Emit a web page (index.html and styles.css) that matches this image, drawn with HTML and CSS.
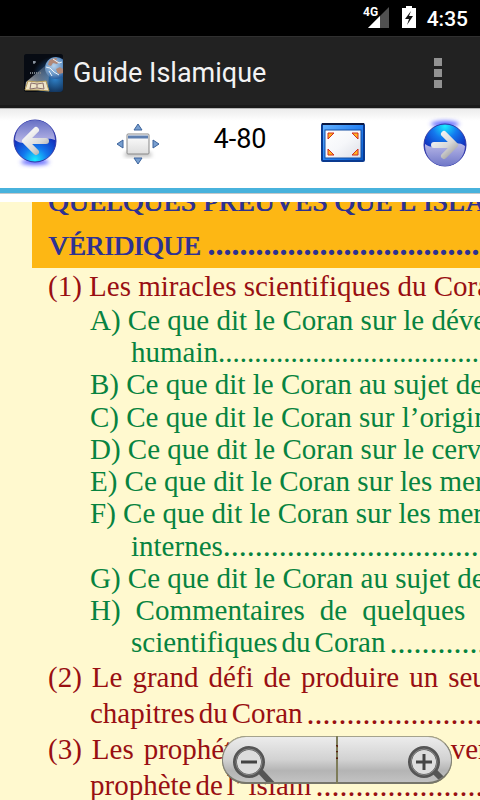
FILE: index.html
```html
<!DOCTYPE html>
<html lang="fr">
<head>
<meta charset="utf-8">
<meta name="viewport" content="width=device-width, initial-scale=1">
<title>Guide Islamique</title>
<link rel="stylesheet" href="styles.css">
</head>
<body>
<div class="status">
  <svg class="signal" width="28" height="24" viewBox="0 0 28 24" role="img" aria-label="Signal">
    <path d="M27 2v21H6z" fill="#505050"/><path d="M18 11v12H6z" fill="#fff"/>
    <text x="1" y="11" class="network">4G</text>
  </svg>
  <svg class="battery" width="14" height="22" viewBox="0 0 14 22" role="img" aria-label="Batterie">
    <path d="M4 0h6v2h4v20H0V2h4z" fill="#fff"/><path d="M9 5 3 13h4l-2 6 6-9H7z" fill="#111"/>
  </svg>
  <time>4:35</time>
</div>
<header class="appbar">
  <svg class="logo" width="39" height="38" viewBox="0 0 39 38" aria-hidden="true">
    <defs>
      <radialGradient id="sky" cx=".8" cy=".65" r=".6"><stop offset="0" stop-color="#2f83cb"/><stop offset=".55" stop-color="#153b66"/><stop offset="1" stop-color="#070b13"/></radialGradient>
      <linearGradient id="beam" x1="1" y1="0" x2="0" y2="1"><stop offset="0" stop-color="#8b99ad" stop-opacity=".2"/><stop offset=".5" stop-color="#8f99a6" stop-opacity=".7"/><stop offset="1" stop-color="#e0dfdb"/></linearGradient>
      <radialGradient id="globe" cx=".4" cy=".4" r=".6"><stop offset="0" stop-color="#b9d2ea"/><stop offset=".6" stop-color="#6f9ccb"/><stop offset="1" stop-color="#2a5f9f"/></radialGradient>
      <clipPath id="frame"><rect width="39" height="38" rx="3"/></clipPath>
    </defs>
    <g clip-path="url(#frame)">
      <rect width="39" height="38" fill="#080d15"/>
      <rect width="39" height="38" fill="url(#sky)"/>
      <circle cx="32" cy="14" r="11" fill="url(#globe)"/>
      <path d="M25 7c2-2 5-3 8-3l-1 3 3 1-2 2-4-1-2 3-3-1zM32 15l4-2 3 2v4l-4 1-2-2z" fill="#b08878"/>
      <path d="M22 13l4 1 4 4 5 3M29 5l6 4 3-1M25 17l3 5" stroke="#edf3f8" fill="none"/>
      <path d="M21 12 2 28l-1 8 23-1 1-14z" fill="url(#beam)"/>
      <path d="m4 27 9 1 9-1 3 10-11-1-13 0z" fill="#efe5c8" stroke="#b59b58"/>
      <path d="m7 29 6 1 6-1 1 6-7-1-7 1zM13 30v4" stroke="#8b6f6b" fill="none"/>
      <path d="M10 7v3M9 8h3" stroke="#b6c1cd"/><path d="M6 19h12" stroke="#777f86" stroke-width="2" stroke-dasharray="1 1"/>
    </g>
  </svg>
  <h1>Guide Islamique</h1>
  <button class="overflow" type="button" aria-label="Plus d'options"><i></i><i></i><i></i></button>
</header>
<nav class="toolbar" aria-label="Pages">
  <button type="button" aria-label="Page précédente">
    <svg width="48" height="52" viewBox="0 0 48 52">
      <defs>
        <radialGradient id="ballL" cx=".5" cy=".95" r=".75"><stop offset="0" stop-color="#19edff"/><stop offset=".4" stop-color="#1378ee"/><stop offset="1" stop-color="#111aae"/></radialGradient>
        <linearGradient id="glossL" x2="0" y2="1"><stop offset="0" stop-color="#6770c4"/><stop offset="1" stop-color="#b9b8e8"/></linearGradient>
        <linearGradient id="metal" gradientUnits="userSpaceOnUse" x1="14" y1="12" x2="36" y2="38"><stop offset="0" stop-color="#fff"/><stop offset=".6" stop-color="#d8d8d8"/><stop offset="1" stop-color="#999"/></linearGradient>
        <filter id="soft" x="-30%" y="-100%" width="160%" height="300%"><feGaussianBlur stdDeviation="2"/></filter>
      </defs>
      <ellipse cx="24" cy="45" rx="14" ry="3" fill="#5b62ff" filter="url(#soft)"/>
      <circle cx="24" cy="24" r="21" fill="url(#ballL)" stroke="#3037a5"/>
      <path d="M4 23A20 20 0 0 1 44 23C37 20 30 23 24 24S10 28 4 23z" fill="url(#glossL)"/>
      <path d="M25 13 14 24l11 11M15 24h20" fill="none" stroke="url(#metal)" stroke-width="6" stroke-linecap="round" stroke-linejoin="round"/>
    </svg>
  </button>
  <button type="button" aria-label="Ajuster à l'écran">
    <svg width="48" height="52" viewBox="0 0 48 52">
      <defs><linearGradient id="pane" x2="0" y2="1"><stop offset="0" stop-color="#fff"/><stop offset="1" stop-color="#ddd"/></linearGradient></defs>
      <path d="M12 36h24l2 3H10z" fill="#999" filter="url(#soft)"/>
      <rect x="13" y="17" width="22" height="20" rx="1" fill="url(#pane)" stroke="#888"/>
      <path d="M14 20h20" stroke="#5e7fb0" stroke-width="3"/>
      <path d="m24 7 4 6h-8zM24 47l4-6h-8zM3 27l6-4v8zM45 27l-6-4v8z" fill="#789fd0" stroke="#3c639b"/>
    </svg>
  </button>
  <span class="page">4-80</span>
  <button type="button" aria-label="Plein écran">
    <svg width="48" height="52" viewBox="0 0 48 52">
      <defs>
        <linearGradient id="win" x2="1" y2="1"><stop offset="0" stop-color="#66b3ff"/><stop offset=".5" stop-color="#2682f4"/><stop offset="1" stop-color="#0758c5"/></linearGradient>
        <linearGradient id="glass" x2="1" y2="1"><stop offset="0" stop-color="#fff"/><stop offset=".5" stop-color="#f6f7fa"/><stop offset="1" stop-color="#dcdfe7"/></linearGradient>
      </defs>
      <rect x="3" y="7" width="42" height="37" rx="1" fill="url(#win)" stroke="#0a3a90" stroke-width="2"/>
      <path d="M3 7h42" stroke="#0a1740" stroke-width="2"/>
      <rect x="6" y="13" width="36" height="28" fill="url(#glass)" stroke="#174fa2"/>
      <path d="M9 16h6l-6 6zM39 16h-6l6 6zM9 38h6l-6-6zM39 38h-6l6-6z" fill="#ffb520" stroke="#d22d20"/>
    </svg>
  </button>
  <button type="button" aria-label="Page suivante">
    <svg width="48" height="52" viewBox="0 0 48 52">
      <defs>
        <radialGradient id="ballR" cx=".5" cy=".05" r=".75"><stop offset="0" stop-color="#19edff"/><stop offset=".4" stop-color="#1378ee"/><stop offset="1" stop-color="#111aae"/></radialGradient>
        <linearGradient id="glossR" x2="0" y2="1"><stop offset="0" stop-color="#b9b8e8"/><stop offset="1" stop-color="#7078c8"/></linearGradient>
      </defs>
      <ellipse cx="24" cy="7" rx="14" ry="3" fill="#5b62ff" filter="url(#soft)"/>
      <circle cx="24" cy="28" r="21" fill="url(#ballR)" stroke="#3037a5"/>
      <path d="M4 29A20 20 0 0 0 44 29C38 24 30 27 24 28S10 32 4 27z" fill="url(#glossR)"/>
      <path d="m23 17 11 11-11 11M13 28h20" fill="none" stroke="url(#metal)" stroke-width="6" stroke-linecap="round" stroke-linejoin="round"/>
    </svg>
  </button>
</nav>
<main class="viewer">
  <article class="sheet">
    <h2><span>QUELQUES PREUVES QUE L’ISLAM</span><span>VÉRIDIQUE <b class="dots">........................................</b></span></h2>
    <p class="part">(1) Les miracles scientifiques du Coran</p>
    <div class="points">
      <p>A) Ce que dit le Coran sur le développement</p>
      <p class="cont">humain..................................................</p>
      <p>B) Ce que dit le Coran au sujet des</p>
      <p>C) Ce que dit le Coran sur l’origine</p>
      <p>D) Ce que dit le Coran sur le cerveau</p>
      <p>E) Ce que dit le Coran sur les mers</p>
      <p>F) Ce que dit le Coran sur les mers</p>
      <p class="cont">internes<span class="leader">........................................</span></p>
      <p>G) Ce que dit le Coran au sujet des</p>
      <p class="words wide"><span>H)</span><span>Commentaires</span><span>de</span><span>quelques</span></p>
      <p class="cont words tight"><span>scientifiques</span><span>du</span><span>Coran</span><span class="leader">..............................</span></p>
    </div>
    <p class="part words loose"><span>(2)</span><span>Le</span><span>grand</span><span>défi</span><span>de</span><span>produire</span><span>un</span><span>seul</span></p>
    <p class="part cont words tight"><span>chapitres</span><span>du</span><span>Coran</span><span class="leader">........................................</span></p>
    <p class="part words loose"><span>(3)</span><span>Les</span><span>prophéties</span><span>concernant</span><span class="venue">un</span><span>vers</span></p>
    <p class="part cont words tight"><span>prophète</span><span>de</span><span>l’</span><span>islam</span><span class="leader">........................................</span></p>
  </article>
  <div class="zoom">
    <button type="button" class="out" aria-label="Zoom arrière">
      <svg width="44" height="40" viewBox="0 0 44 40"><path d="m28 26 13 14" stroke="#555" stroke-width="6"/><circle cx="17" cy="17" r="14" fill="#ddd" stroke="#555" stroke-width="4"/><circle cx="17" cy="17" r="13" fill="none" stroke="#888"/><path d="M9 17h16" stroke="#444" stroke-width="3"/></svg>
    </button>
    <button type="button" class="in" aria-label="Zoom avant">
      <svg width="44" height="40" viewBox="0 0 44 40"><path d="m27 26 11 11" stroke="#555" stroke-width="6"/><circle cx="17" cy="17" r="14" fill="#ddd" stroke="#555" stroke-width="4"/><circle cx="17" cy="17" r="13" fill="none" stroke="#888"/><path d="M9 17h16M17 9v16" stroke="#444" stroke-width="3"/></svg>
    </button>
  </div>
</main>
</body>
</html>
```
FILE: styles.css
```css
* { box-sizing: border-box; }
body {
  margin: 0;
  height: 100vh;
  display: flex;
  flex-direction: column;
  overflow: hidden;
  background: #fff;
  font-family: Roboto, "Liberation Sans", sans-serif;
}
h1, h2, p { margin: 0; font-weight: 400; }
button { border: 0; padding: 0; background: none; }
svg { display: block; flex: none; }

.status {
  flex: none;
  height: 36px;
  padding: 2px 12px 0;
  display: flex;
  align-items: center;
  justify-content: flex-end;
  background: #000;
  color: #fff;
}
.network { font: 700 12px Roboto, sans-serif; fill: #fff; }
.signal { margin-bottom: 4px; }
.battery { margin: 0 11px 4px 12px; }
.status time { font-size: 21px; font-weight: 500; }

.appbar {
  flex: none;
  height: 72px;
  padding: 4px 34px 0 24px;
  display: flex;
  align-items: center;
  gap: 10px;
  background: #222;
  border-top: 1px solid #303030;
  border-bottom: 3px solid #1a1a1a;
  color: #f3f3f3;
}
.appbar h1 { flex: 1; font-size: 27px; }
.overflow { display: grid; gap: 3px; padding: 0 4px; }
.overflow i { width: 8px; height: 8px; background: #929292; }

.toolbar {
  flex: none;
  height: 85px;
  padding: 8px 11px 0;
  display: flex;
  justify-content: space-between;
  align-items: flex-start;
  background: linear-gradient(#ececec, #fff 12px);
  border-top: 1px solid #b5b5b5;
  border-bottom: 5px solid #48b2dc;
  box-shadow: 0 1px #c4c8ca;
}
.page { width: 56px; margin: 0 -4px; text-align: center; font-size: 27px; line-height: 44px; color: #000; }

.viewer {
  flex: 1;
  min-height: 0;
  margin-top: 9px;
  position: relative;
  overflow: hidden;
  background: #fff9cf;
  font-family: "Liberation Serif", serif;
  font-size: 29px;
  white-space: nowrap;
}
.sheet { padding-left: 32px; color: #990f12; }
h2 {
  height: 66px;
  padding-left: 16px;
  display: flex;
  flex-direction: column;
  justify-content: flex-end;
  background: #fdb714;
  color: #2e3192;
  font-size: 28px;
  line-height: 44px;
  text-shadow: 1px 0 #2e3192;
}
h2 span { flex: none; }
.dots { font-size: 32px; line-height: 32px; text-shadow: none; }

.part { padding-left: 16px; line-height: 36px; }
.part.cont { padding-left: 58px; }
.points { padding-left: 58px; margin-bottom: 1px; line-height: 32px; color: #078340; }
.points p:nth-child(4n) { margin-top: 1px; }
.points .cont { padding-left: 41px; }
.words { display: flex; }
.words span { flex: none; }
.tight { gap: 4px; }
.loose { gap: 10px; }
.wide { gap: 15px; }
.leader { font-size: 32px; line-height: 0; }
.words .leader { line-height: inherit; }

.zoom {
  position: absolute;
  right: 28px;
  bottom: 16px;
  width: 230px;
  height: 48px;
  display: grid;
  grid-template-columns: 1fr 1fr;
  gap: 2px;
  border-radius: 24px;
  background: rgb(40 40 10 / 60%);
}
.zoom button {
  display: flex;
  overflow: hidden;
  padding-top: 8px;
  background: linear-gradient(#ececec, #d2d2d2 50%, #b4b4b4 75%, #c2c2c2);
  border-top: 1px solid #a5a38d;
  border-bottom: 2px solid #77766a;
}
.zoom .out { padding-left: 9px; border-radius: 24px 0 0 24px; border-left: 1px solid #85847a; }
.zoom .in { justify-content: flex-end; border-radius: 0 24px 24px 0; border-right: 1px solid #85847a; }
```
